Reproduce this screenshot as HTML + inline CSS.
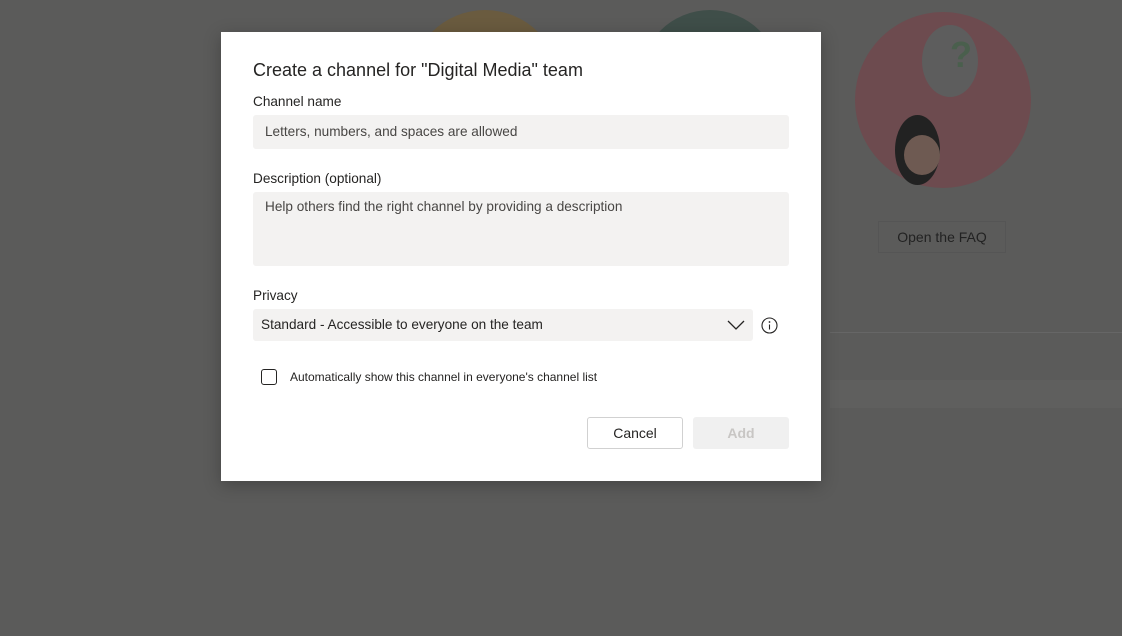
<!DOCTYPE html>
<html><head><style>
body{margin:0;width:1122px;height:636px;background:#5b5b5a;position:relative;overflow:hidden;font-family:"Segoe UI","Liberation Sans",sans-serif;color:#252423}
.c{position:absolute;border-radius:50%}
.dlg{position:absolute;left:221px;top:32px;width:600px;height:449px;background:#fff;box-shadow:0 4px 16px rgba(0,0,0,.25)}
.t{position:absolute;left:32px;top:28px;font-size:18px;font-weight:normal;color:#252423}
.l{position:absolute;left:32px;font-size:13.6px;color:#252423}
.in{position:absolute;left:32px;width:536px;background:#f3f2f1;border-radius:3px;font-size:13.6px;color:#484644;box-sizing:border-box;padding-left:12px}
</style></head><body>
<div class="c" style="left:410px;top:10px;width:150px;height:150px;background:#6a5b3f"></div>
<div class="c" style="left:640px;top:10px;width:140px;height:140px;background:#3f4e49"></div>
<div class="c" style="left:855px;top:12px;width:176px;height:176px;background:#6d4b4f"></div>
<div class="c" style="left:922px;top:25px;width:56px;height:72px;background:#5d5d5d"></div>
<div style="position:absolute;left:950px;top:34px;font:bold 36px 'Liberation Sans';color:#4a5f4d">?</div>
<div class="c" style="left:895px;top:115px;width:45px;height:70px;background:#222"></div>
<div class="c" style="left:904px;top:135px;width:36px;height:40px;background:#6e5a52"></div>
<div style="position:absolute;left:878px;top:221px;width:128px;height:32px;border:1px solid #555;box-sizing:border-box;color:#222;font-size:14px;text-align:center;line-height:30px">Open the FAQ</div>
<div style="position:absolute;left:830px;top:332px;width:292px;height:1px;background:#666"></div>
<div style="position:absolute;left:830px;top:380px;width:292px;height:28px;background:#5f5f5e"></div>
<div class="dlg">
<div class="t">Create a channel for "Digital Media" team</div>
<div class="l" style="top:62px">Channel name</div>
<div class="in" style="top:83px;height:34px;line-height:34px">Letters, numbers, and spaces are allowed</div>
<div class="l" style="top:139px">Description (optional)</div>
<div class="in" style="top:160px;height:74px;padding-top:7px">Help others find the right channel by providing a description</div>
<div class="l" style="top:256px">Privacy</div>
<div class="in" style="top:277px;height:32px;line-height:32px;width:500px;padding-left:8px;color:#252423">Standard - Accessible to everyone on the team
<svg style="position:absolute;right:8px;top:10px" width="18" height="12" viewBox="0 0 18 12"><path d="M1 2l8 8 8-8" fill="none" stroke="#252423" stroke-width="1.3"/></svg></div>
<svg style="position:absolute;left:540px;top:285px" width="17" height="17" viewBox="0 0 17 17"><circle cx="8.5" cy="8.5" r="7.5" fill="none" stroke="#252423" stroke-width="1.1"/><path d="M8.5 7.5v5" stroke="#252423" stroke-width="1.1"/><circle cx="8.5" cy="5" r=".9" fill="#252423"/></svg>
<div style="position:absolute;left:40px;top:337px;width:16px;height:16px;border:1px solid #252423;border-radius:3px;box-sizing:border-box"></div>
<div class="l" style="left:69px;top:338px;font-size:12px">Automatically show this channel in everyone's channel list</div>
<div style="position:absolute;left:366px;top:385px;width:96px;height:32px;border:1px solid #d1d1d1;box-sizing:border-box;font-size:14px;text-align:center;line-height:30px;border-radius:3px">Cancel</div>
<div style="position:absolute;left:472px;top:385px;width:96px;height:32px;background:#f0f0f0;color:#c8c6c4;font-size:14px;text-align:center;line-height:32px;font-weight:600;border-radius:3px">Add</div>
</div>
</body></html>
